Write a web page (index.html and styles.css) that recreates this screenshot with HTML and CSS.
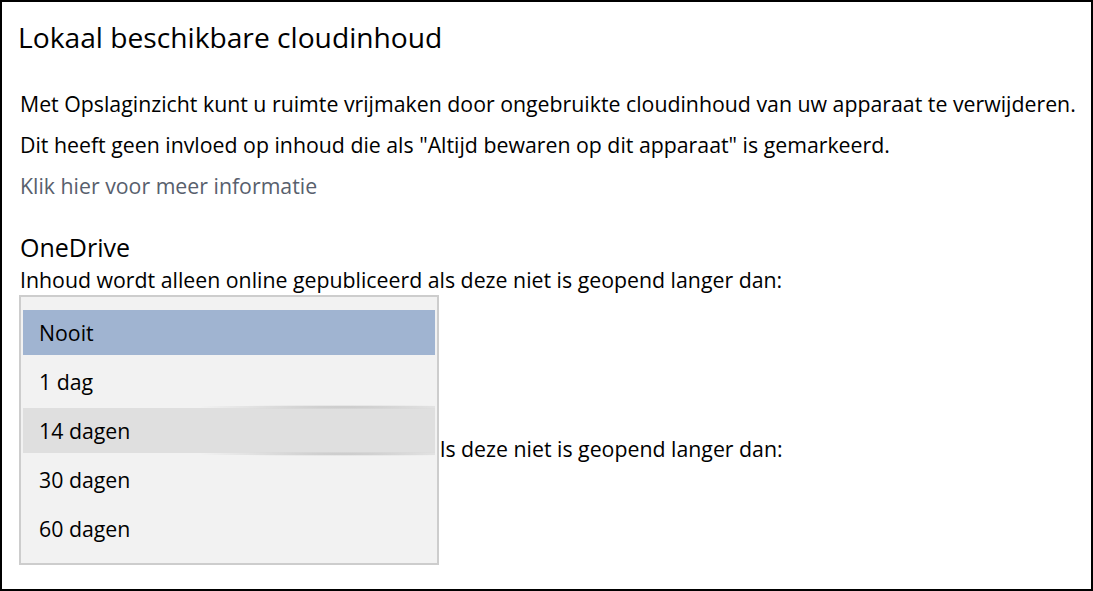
FILE: index.html
```html
<!DOCTYPE html>
<html lang="nl">
<head>
    <meta charset="UTF-8">
    <meta name="viewport" content="width=device-width, initial-scale=1.0">
    <title>Opslaginzicht</title>
    <link rel="stylesheet" href="styles.css">
</head>
<body>
    <div class="panel">
        <h1>Lokaal beschikbare cloudinhoud</h1>
        <p class="line">Met Opslaginzicht kunt u ruimte vrijmaken door ongebruikte cloudinhoud van uw apparaat te verwijderen.</p>
        <p class="line">Dit heeft geen invloed op inhoud die als "Altijd bewaren op dit apparaat" is gemarkeerd.</p>
        <a class="line more-info" href="#">Klik hier voor meer informatie</a>

        <h2>OneDrive</h2>
        <p class="label">Inhoud wordt alleen online gepubliceerd als deze niet is geopend langer dan:</p>

        <div class="picker-row">
            <ul class="menu">
                <li class="selected">Nooit</li>
                <li>1 dag</li>
                <li class="hover">14 dagen</li>
                <li>30 dagen</li>
                <li>60 dagen</li>
            </ul>
            <p class="label behind">ls deze niet is geopend langer dan:</p>
        </div>
    </div>
</body>
</html>
```
FILE: styles.css
```css
html, body {
    margin: 0;
    padding: 0;
    background: white;
}
body {
    font-family: 'Open Sans', 'Noto Sans', sans-serif;
    color: #000;
}
.panel {
    height: 591px;
    box-sizing: border-box;
    border: 2px solid #000;
    padding: 17px 0 0 16px;
    overflow: hidden;
}
h1 {
    margin: 0;
    font-size: 28.2px;
    font-weight: 400;
    line-height: 36px;
}
.line {
    display: block;
    margin: 0;
    padding-left: 2px;
    font-size: 21.3px;
    line-height: 41px;
}
h1 + .line {
    margin-top: 28px;
}
.more-info {
    color: #58606d;
    text-decoration: none;
}
h2 {
    margin: 26px 0 0 2px;
    font-size: 25px;
    font-weight: 400;
    line-height: 30px;
}
.label {
    margin: 3px 0 0 2px;
    font-size: 21.3px;
    line-height: 29px;
}
.picker-row {
    display: flex;
    align-items: flex-start;
    margin-top: 1px;
}
.menu {
    list-style: none;
    margin: 0 0 0 1px;
    padding: 13px 2px 12px;
    width: 412px;
    background: #f2f2f2;
    border: 2px solid #cdcdcd;
    display: flex;
    flex-direction: column;
    gap: 4px;
}
.menu li {
    position: relative;
    height: 45px;
    line-height: 45px;
    padding-left: 16px;
    font-size: 21.3px;
}
.menu li.selected {
    background: #a0b4d1;
}
.menu li.hover {
    background: #dfdfdf;
}
.menu li.hover::before,
.menu li.hover::after {
    content: '';
    position: absolute;
    left: 170px;
    right: 0;
    height: 4px;
    background: radial-gradient(ellipse at 62% 50%, rgba(0,0,0,0.2), rgba(0,0,0,0) 70%);
}
.menu li.hover::before {
    top: -3px;
}
.menu li.hover::after {
    bottom: -3px;
}
.behind {
    margin: 139px 0 0 1px;
}
```
